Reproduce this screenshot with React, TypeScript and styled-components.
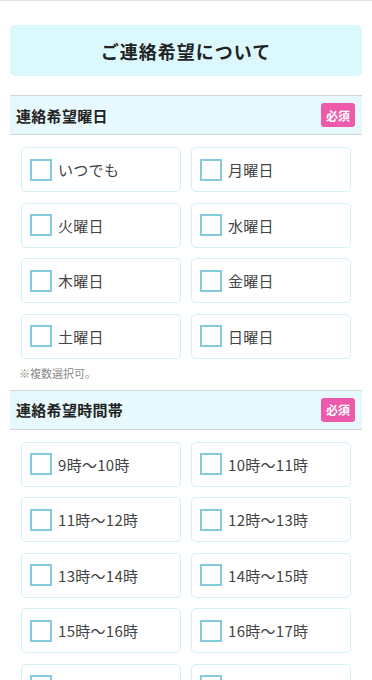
import styled, { createGlobalStyle } from 'styled-components';

const GlobalStyle = createGlobalStyle`
  html, body {
    margin: 0;
    padding: 0;
    background: #ffffff;
    font-family: 'Noto Sans CJK JP', 'Noto Sans', sans-serif;
    color: #333333;
  }
  * { box-sizing: border-box; }
`;

const Page = styled.div`
  border-top: 1px solid #e2e2e2;
  padding: 24px 10px 0;
  width: 372px;
  height: 680px;
  overflow: hidden;
`;

const TitleBox = styled.div`
  background: #dbf8fd;
  border-radius: 5px;
  height: 51px;
  display: flex;
  align-items: center;
  justify-content: center;
  font-size: 18px;
  font-weight: 700;
  letter-spacing: 1px;
  color: #222222;
  margin-bottom: 19px;
`;

const SectionHeader = styled.div`
  background: #e8f9fd;
  border-top: 1px solid #cfd6d8;
  border-bottom: 1px solid #cfd6d8;
  height: 40px;
  display: flex;
  align-items: center;
  justify-content: space-between;
  padding: 0 7px 0 6px;
`;

const SectionTitle = styled.span`
  font-size: 15px;
  font-weight: 700;
  letter-spacing: 0.3px;
  color: #222222;
`;

const Required = styled.span`
  background: #ee5aab;
  color: #ffffff;
  font-size: 12px;
  font-weight: 700;
  border-radius: 3px;
  width: 34px;
  height: 24px;
  display: flex;
  align-items: center;
  justify-content: center;
`;

const Grid = styled.div`
  display: grid;
  grid-template-columns: 160px 160px;
  column-gap: 10px;
  row-gap: 10.5px;
  padding: 12px 11px 0;
`;

const Card = styled.label`
  display: flex;
  align-items: center;
  gap: 6px;
  height: 45px;
  padding: 0 8px;
  border: 1px solid #d5eff6;
  border-radius: 5px;
  background: #ffffff;
  font-size: 15px;
  letter-spacing: 0.3px;
  color: #444444;
`;

const Box = styled.span`
  width: 22px;
  height: 22px;
  border: 2px solid #84c9de;
  flex: 0 0 auto;
`;

const Note = styled.p`
  margin: 6px 0 9px 9px;
  font-size: 11px;
  color: #8a8a8a;
`;

const days = ['いつでも', '月曜日', '火曜日', '水曜日', '木曜日', '金曜日', '土曜日', '日曜日'];
const times = [
  '9時〜10時',
  '10時〜11時',
  '11時〜12時',
  '12時〜13時',
  '13時〜14時',
  '14時〜15時',
  '15時〜16時',
  '16時〜17時',
  '17時〜18時',
  '18時〜19時',
];

const Options = ({ items }: { items: string[] }) => (
  <Grid>
    {items.map((item) => (
      <Card key={item}>
        <Box />
        {item}
      </Card>
    ))}
  </Grid>
);

export default function App() {
  return (
    <>
      <GlobalStyle />
      <Page>
        <TitleBox>ご連絡希望について</TitleBox>
        <SectionHeader>
          <SectionTitle>連絡希望曜日</SectionTitle>
          <Required>必須</Required>
        </SectionHeader>
        <Options items={days} />
        <Note>※複数選択可。</Note>
        <SectionHeader>
          <SectionTitle>連絡希望時間帯</SectionTitle>
          <Required>必須</Required>
        </SectionHeader>
        <Options items={times} />
      </Page>
    </>
  );
}
